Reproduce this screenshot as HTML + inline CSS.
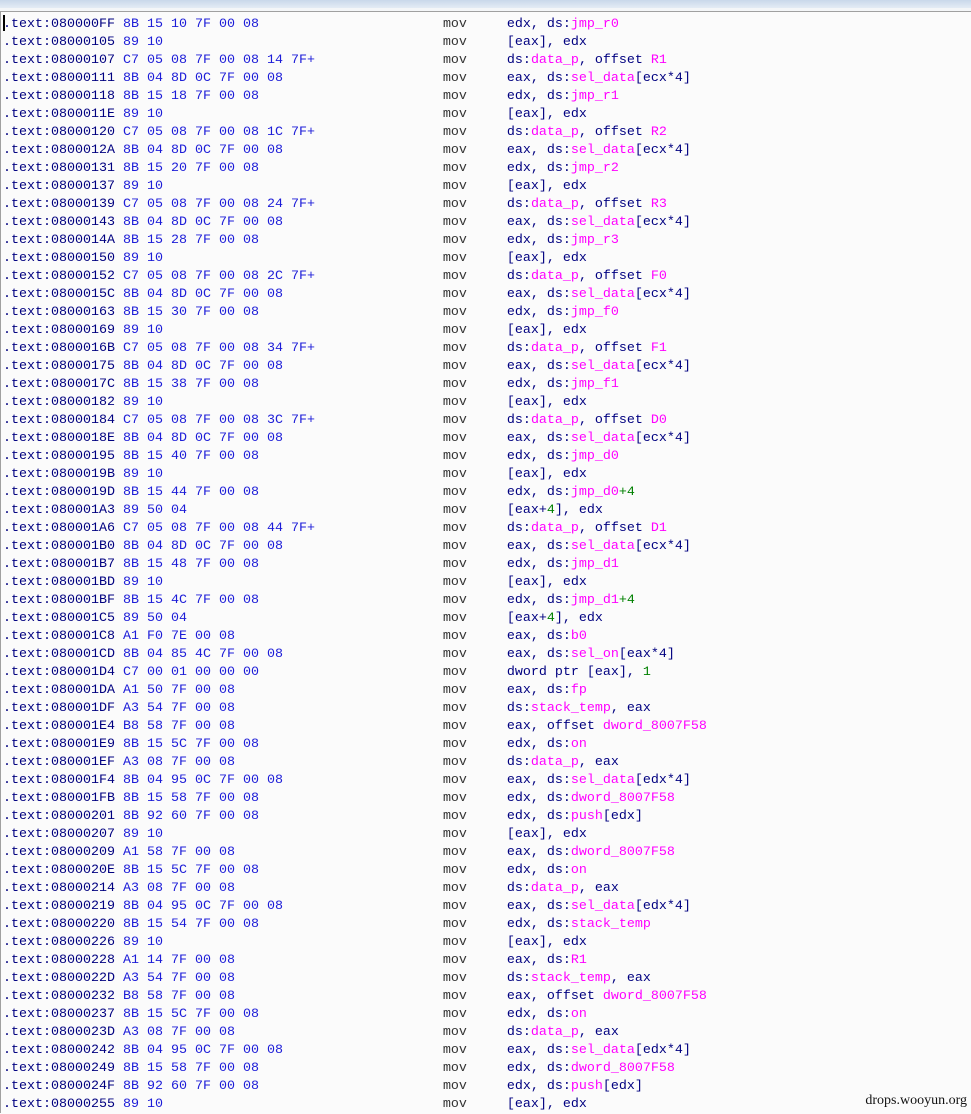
<!DOCTYPE html>
<html><head><meta charset="utf-8"><style>
body{margin:0;width:971px;height:1113px;overflow:hidden;background:#fbfbfb;position:relative}
.top{position:absolute;left:0;top:0;width:971px;height:8px;background:linear-gradient(#c9d8ea,#e4ecf5)}
.top2{position:absolute;left:0;top:8px;width:971px;height:3px;background:#f4f6f8}
.ln{position:absolute;left:0;top:11px;width:971px;height:1px;background:#a0a0a0}
.lb{position:absolute;left:0;top:11px;width:1px;height:1102px;background:#a0a0a0}
.cur{position:absolute;left:3px;top:15px;width:2px;height:16px;background:#000}
pre{position:absolute;left:3px;top:16px;margin:0;font:13.33px/18px "Liberation Mono",monospace;color:#000080}
.a{color:#000080}.b{color:#1c1cd8}.m{color:#333}.n{color:#ff00ff}.g{color:#008000}
.wm{position:absolute;right:4px;top:1093px;font:14px "Liberation Serif",serif;color:#111}
</style></head><body>
<div class="top"></div><div class="top2"></div><div class="ln"></div><div class="lb"></div><div class="cur"></div>
<pre><span class="a">.text:080000FF</span> <span class="b">8B 15 10 7F 00 08</span>                       <span class="m">mov</span>     edx, ds:<span class="n">jmp_r0</span>
<span class="a">.text:08000105</span> <span class="b">89 10</span>                                   <span class="m">mov</span>     [eax], edx
<span class="a">.text:08000107</span> <span class="b">C7 05 08 7F 00 08 14 7F+</span>                <span class="m">mov</span>     ds:<span class="n">data_p</span>, offset <span class="n">R1</span>
<span class="a">.text:08000111</span> <span class="b">8B 04 8D 0C 7F 00 08</span>                    <span class="m">mov</span>     eax, ds:<span class="n">sel_data</span>[ecx*4]
<span class="a">.text:08000118</span> <span class="b">8B 15 18 7F 00 08</span>                       <span class="m">mov</span>     edx, ds:<span class="n">jmp_r1</span>
<span class="a">.text:0800011E</span> <span class="b">89 10</span>                                   <span class="m">mov</span>     [eax], edx
<span class="a">.text:08000120</span> <span class="b">C7 05 08 7F 00 08 1C 7F+</span>                <span class="m">mov</span>     ds:<span class="n">data_p</span>, offset <span class="n">R2</span>
<span class="a">.text:0800012A</span> <span class="b">8B 04 8D 0C 7F 00 08</span>                    <span class="m">mov</span>     eax, ds:<span class="n">sel_data</span>[ecx*4]
<span class="a">.text:08000131</span> <span class="b">8B 15 20 7F 00 08</span>                       <span class="m">mov</span>     edx, ds:<span class="n">jmp_r2</span>
<span class="a">.text:08000137</span> <span class="b">89 10</span>                                   <span class="m">mov</span>     [eax], edx
<span class="a">.text:08000139</span> <span class="b">C7 05 08 7F 00 08 24 7F+</span>                <span class="m">mov</span>     ds:<span class="n">data_p</span>, offset <span class="n">R3</span>
<span class="a">.text:08000143</span> <span class="b">8B 04 8D 0C 7F 00 08</span>                    <span class="m">mov</span>     eax, ds:<span class="n">sel_data</span>[ecx*4]
<span class="a">.text:0800014A</span> <span class="b">8B 15 28 7F 00 08</span>                       <span class="m">mov</span>     edx, ds:<span class="n">jmp_r3</span>
<span class="a">.text:08000150</span> <span class="b">89 10</span>                                   <span class="m">mov</span>     [eax], edx
<span class="a">.text:08000152</span> <span class="b">C7 05 08 7F 00 08 2C 7F+</span>                <span class="m">mov</span>     ds:<span class="n">data_p</span>, offset <span class="n">F0</span>
<span class="a">.text:0800015C</span> <span class="b">8B 04 8D 0C 7F 00 08</span>                    <span class="m">mov</span>     eax, ds:<span class="n">sel_data</span>[ecx*4]
<span class="a">.text:08000163</span> <span class="b">8B 15 30 7F 00 08</span>                       <span class="m">mov</span>     edx, ds:<span class="n">jmp_f0</span>
<span class="a">.text:08000169</span> <span class="b">89 10</span>                                   <span class="m">mov</span>     [eax], edx
<span class="a">.text:0800016B</span> <span class="b">C7 05 08 7F 00 08 34 7F+</span>                <span class="m">mov</span>     ds:<span class="n">data_p</span>, offset <span class="n">F1</span>
<span class="a">.text:08000175</span> <span class="b">8B 04 8D 0C 7F 00 08</span>                    <span class="m">mov</span>     eax, ds:<span class="n">sel_data</span>[ecx*4]
<span class="a">.text:0800017C</span> <span class="b">8B 15 38 7F 00 08</span>                       <span class="m">mov</span>     edx, ds:<span class="n">jmp_f1</span>
<span class="a">.text:08000182</span> <span class="b">89 10</span>                                   <span class="m">mov</span>     [eax], edx
<span class="a">.text:08000184</span> <span class="b">C7 05 08 7F 00 08 3C 7F+</span>                <span class="m">mov</span>     ds:<span class="n">data_p</span>, offset <span class="n">D0</span>
<span class="a">.text:0800018E</span> <span class="b">8B 04 8D 0C 7F 00 08</span>                    <span class="m">mov</span>     eax, ds:<span class="n">sel_data</span>[ecx*4]
<span class="a">.text:08000195</span> <span class="b">8B 15 40 7F 00 08</span>                       <span class="m">mov</span>     edx, ds:<span class="n">jmp_d0</span>
<span class="a">.text:0800019B</span> <span class="b">89 10</span>                                   <span class="m">mov</span>     [eax], edx
<span class="a">.text:0800019D</span> <span class="b">8B 15 44 7F 00 08</span>                       <span class="m">mov</span>     edx, ds:<span class="n">jmp_d0</span><span class="g">+4</span>
<span class="a">.text:080001A3</span> <span class="b">89 50 04</span>                                <span class="m">mov</span>     [eax+<span class="g">4</span>], edx
<span class="a">.text:080001A6</span> <span class="b">C7 05 08 7F 00 08 44 7F+</span>                <span class="m">mov</span>     ds:<span class="n">data_p</span>, offset <span class="n">D1</span>
<span class="a">.text:080001B0</span> <span class="b">8B 04 8D 0C 7F 00 08</span>                    <span class="m">mov</span>     eax, ds:<span class="n">sel_data</span>[ecx*4]
<span class="a">.text:080001B7</span> <span class="b">8B 15 48 7F 00 08</span>                       <span class="m">mov</span>     edx, ds:<span class="n">jmp_d1</span>
<span class="a">.text:080001BD</span> <span class="b">89 10</span>                                   <span class="m">mov</span>     [eax], edx
<span class="a">.text:080001BF</span> <span class="b">8B 15 4C 7F 00 08</span>                       <span class="m">mov</span>     edx, ds:<span class="n">jmp_d1</span><span class="g">+4</span>
<span class="a">.text:080001C5</span> <span class="b">89 50 04</span>                                <span class="m">mov</span>     [eax+<span class="g">4</span>], edx
<span class="a">.text:080001C8</span> <span class="b">A1 F0 7E 00 08</span>                          <span class="m">mov</span>     eax, ds:<span class="n">b0</span>
<span class="a">.text:080001CD</span> <span class="b">8B 04 85 4C 7F 00 08</span>                    <span class="m">mov</span>     eax, ds:<span class="n">sel_on</span>[eax*4]
<span class="a">.text:080001D4</span> <span class="b">C7 00 01 00 00 00</span>                       <span class="m">mov</span>     dword ptr [eax], <span class="g">1</span>
<span class="a">.text:080001DA</span> <span class="b">A1 50 7F 00 08</span>                          <span class="m">mov</span>     eax, ds:<span class="n">fp</span>
<span class="a">.text:080001DF</span> <span class="b">A3 54 7F 00 08</span>                          <span class="m">mov</span>     ds:<span class="n">stack_temp</span>, eax
<span class="a">.text:080001E4</span> <span class="b">B8 58 7F 00 08</span>                          <span class="m">mov</span>     eax, offset <span class="n">dword_8007F58</span>
<span class="a">.text:080001E9</span> <span class="b">8B 15 5C 7F 00 08</span>                       <span class="m">mov</span>     edx, ds:<span class="n">on</span>
<span class="a">.text:080001EF</span> <span class="b">A3 08 7F 00 08</span>                          <span class="m">mov</span>     ds:<span class="n">data_p</span>, eax
<span class="a">.text:080001F4</span> <span class="b">8B 04 95 0C 7F 00 08</span>                    <span class="m">mov</span>     eax, ds:<span class="n">sel_data</span>[edx*4]
<span class="a">.text:080001FB</span> <span class="b">8B 15 58 7F 00 08</span>                       <span class="m">mov</span>     edx, ds:<span class="n">dword_8007F58</span>
<span class="a">.text:08000201</span> <span class="b">8B 92 60 7F 00 08</span>                       <span class="m">mov</span>     edx, ds:<span class="n">push</span>[edx]
<span class="a">.text:08000207</span> <span class="b">89 10</span>                                   <span class="m">mov</span>     [eax], edx
<span class="a">.text:08000209</span> <span class="b">A1 58 7F 00 08</span>                          <span class="m">mov</span>     eax, ds:<span class="n">dword_8007F58</span>
<span class="a">.text:0800020E</span> <span class="b">8B 15 5C 7F 00 08</span>                       <span class="m">mov</span>     edx, ds:<span class="n">on</span>
<span class="a">.text:08000214</span> <span class="b">A3 08 7F 00 08</span>                          <span class="m">mov</span>     ds:<span class="n">data_p</span>, eax
<span class="a">.text:08000219</span> <span class="b">8B 04 95 0C 7F 00 08</span>                    <span class="m">mov</span>     eax, ds:<span class="n">sel_data</span>[edx*4]
<span class="a">.text:08000220</span> <span class="b">8B 15 54 7F 00 08</span>                       <span class="m">mov</span>     edx, ds:<span class="n">stack_temp</span>
<span class="a">.text:08000226</span> <span class="b">89 10</span>                                   <span class="m">mov</span>     [eax], edx
<span class="a">.text:08000228</span> <span class="b">A1 14 7F 00 08</span>                          <span class="m">mov</span>     eax, ds:<span class="n">R1</span>
<span class="a">.text:0800022D</span> <span class="b">A3 54 7F 00 08</span>                          <span class="m">mov</span>     ds:<span class="n">stack_temp</span>, eax
<span class="a">.text:08000232</span> <span class="b">B8 58 7F 00 08</span>                          <span class="m">mov</span>     eax, offset <span class="n">dword_8007F58</span>
<span class="a">.text:08000237</span> <span class="b">8B 15 5C 7F 00 08</span>                       <span class="m">mov</span>     edx, ds:<span class="n">on</span>
<span class="a">.text:0800023D</span> <span class="b">A3 08 7F 00 08</span>                          <span class="m">mov</span>     ds:<span class="n">data_p</span>, eax
<span class="a">.text:08000242</span> <span class="b">8B 04 95 0C 7F 00 08</span>                    <span class="m">mov</span>     eax, ds:<span class="n">sel_data</span>[edx*4]
<span class="a">.text:08000249</span> <span class="b">8B 15 58 7F 00 08</span>                       <span class="m">mov</span>     edx, ds:<span class="n">dword_8007F58</span>
<span class="a">.text:0800024F</span> <span class="b">8B 92 60 7F 00 08</span>                       <span class="m">mov</span>     edx, ds:<span class="n">push</span>[edx]
<span class="a">.text:08000255</span> <span class="b">89 10</span>                                   <span class="m">mov</span>     [eax], edx</pre>
<div class="wm">drops.wooyun.org</div>
</body></html>
